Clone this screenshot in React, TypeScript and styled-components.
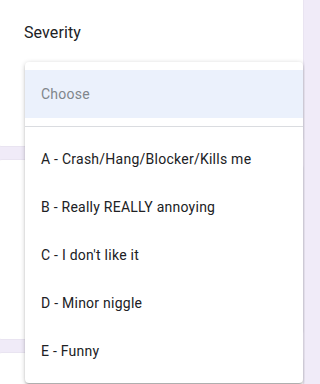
import React from 'react';
import styled, { createGlobalStyle } from 'styled-components';

const GlobalStyle = createGlobalStyle`
    html, body {
        margin: 0;
        padding: 0;
        background-color: #f0ebf8;
        font-family: Roboto, 'Noto Sans', Arial, sans-serif;
        overflow: hidden;
    }
`;

const Page = styled.div`
    position: relative;
    width: 305px;
    height: 384px;
    overflow: hidden;
    background-color: #f0ebf8;
`;

const CardColumn = styled.div`
    display: flex;
    flex-direction: column;
    gap: 14px;
    margin: -8px 0 0 -6px;
    width: 309px;
`;

const Card = styled.div<{ height: number }>`
    background-color: #ffffff;
    border-radius: 8px;
    box-shadow: 0 0 0 0.5px rgba(0, 0, 0, 0.06);
    box-sizing: border-box;
    height: ${({ height }) => height}px;
    padding: 29px 24px 24px 30px;
`;

const QuestionTitle = styled.div`
    font-size: 16px;
    line-height: 24px;
    color: #202124;
    letter-spacing: 0.1px;
`;

const Menu = styled.div`
    position: absolute;
    top: 62px;
    left: 25px;
    width: 278px;
    box-sizing: border-box;
    padding: 8px 0;
    background-color: #ffffff;
    border-radius: 4px;
    box-shadow: 0 2px 2px 0 rgba(0, 0, 0, 0.14), 0 3px 1px -2px rgba(0, 0, 0, 0.12), 0 1px 5px 0 rgba(0, 0, 0, 0.2);
`;

const Option = styled.div<{ placeholder?: boolean }>`
    display: flex;
    align-items: center;
    height: 48px;
    padding: 0 16px;
    font-size: 14px;
    color: ${({ placeholder }) => placeholder ? '#80868b' : '#202124'};
    background-color: ${({ placeholder }) => placeholder ? '#ebf1fc' : 'transparent'};
    letter-spacing: 0.25px;
`;

const Divider = styled.div`
    height: 1px;
    background-color: #dadce0;
    margin: 8px 0;
`;

const options = [
    'A - Crash/Hang/Blocker/Kills me',
    'B - Really REALLY annoying',
    "C - I don't like it",
    'D - Minor niggle',
    'E - Funny',
];

function App() {
    return (
        <Page>
            <GlobalStyle />
            <CardColumn>
                <Card height={154}>
                    <QuestionTitle>Severity</QuestionTitle>
                </Card>
                <Card height={179} />
                <Card height={120} />
            </CardColumn>
            <Menu>
                <Option placeholder>Choose</Option>
                <Divider />
                {options.map((label) => (
                    <Option key={label}>{label}</Option>
                ))}
            </Menu>
        </Page>
    );
}

export default App;
